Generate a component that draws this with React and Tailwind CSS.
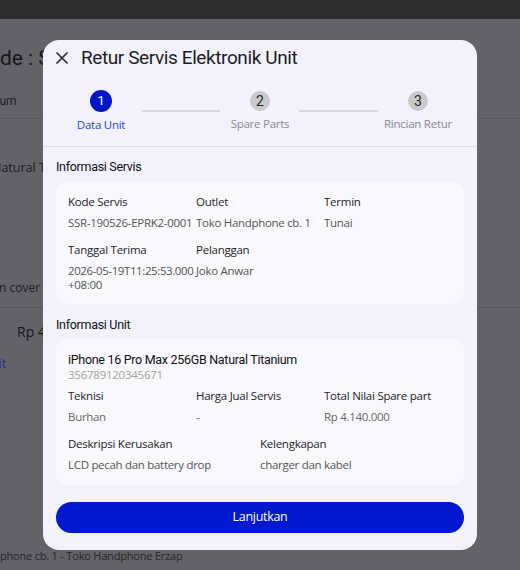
import React from "react";

const body = { fontFamily: '"Open Sans", "Noto Sans", sans-serif' };
const roboto = { fontFamily: 'Roboto, "Noto Sans", sans-serif' };

function Field({ label, value, valueClass = "text-[#555558]" }) {
  return (
    <div className="min-w-0">
      <div className="text-[11.5px] leading-[16px] tracking-[-0.25px] text-[#242427]">{label}</div>
      <div className={`mt-[6px] text-[11.5px] leading-[14px] tracking-[-0.3px] ${valueClass}`}>{value}</div>
    </div>
  );
}

function StepItem({ n, label, active, widthClass, mlClass }) {
  return (
    <div className={`flex flex-col items-center shrink-0 ${widthClass} ${mlClass}`}>
      {active ? (
        <div className="w-[22px] h-[22px] rounded-full bg-[#0016c8] flex items-center justify-center text-white text-[13.5px] leading-none" style={roboto}>
          {n}
        </div>
      ) : (
        <div className="mt-[1px] w-[20px] h-[20px] rounded-full bg-[#cacacd] flex items-center justify-center text-[#262626] text-[14px] leading-none" style={roboto}>
          {n}
        </div>
      )}
      <div
        className={`mt-[5px] whitespace-nowrap text-[11.5px] leading-[16px] tracking-[-0.25px] ${active ? "text-[#2446d6] font-medium" : "text-[#8a8a8e]"}`}
      >
        {label}
      </div>
    </div>
  );
}

export default function App() {
  return (
    <div className="relative w-[520px] h-[570px] overflow-hidden bg-[#636367]" style={body}>
      {/* dimmed page behind the dialog */}
      <div className="h-[19px] bg-[#2f2f2f]" />
      <div className="h-[100px] border-b border-[#57575b] overflow-hidden">
        <div className="pt-[26px] -ml-[25px] whitespace-nowrap text-[21px] leading-[26px] text-[#161618]" style={roboto}>
          Kode : SSR-190526-EPRK2-0001
        </div>
        <div className="mt-[21px] -ml-[31px] whitespace-nowrap text-[12px] leading-[18px] text-[#1c1c1e]" style={roboto}>
          Platinum
        </div>
      </div>
      <div className="h-[189px] border-b border-[#57575b] overflow-hidden">
        <div className="mt-[40px] -ml-[8px] whitespace-nowrap text-[12.5px] leading-[18px] text-[#1c1c1e]">
          Natural Titanium
        </div>
        <div className="mt-[102px] -ml-[1px] whitespace-nowrap text-[12px] leading-[18px] text-[#1c1c1e]">
          n cover belakang
        </div>
      </div>
      <div className="pl-[17px] mt-[14px] whitespace-nowrap text-[14px] leading-[20px] text-[#141416]">Rp 4.140.000</div>
      <div className="mt-[13px] -ml-[16px] whitespace-nowrap text-[12.5px] leading-[18px] text-[#1f2b8c]">Edit</div>
      <div className="mt-[175px] whitespace-nowrap text-[11px] leading-[16px] tracking-[-0.2px] text-[#262628]">
        phone cb. 1 - Toko Handphone Erzap
      </div>

      {/* dialog */}
      <div className="absolute left-[43px] top-[40px] w-[434px] rounded-[16px] bg-[#f3f2fc] overflow-hidden">
        <div className="h-[36px] flex items-center pl-[11px]">
          <svg width="16" height="16" viewBox="0 0 16 16" className="shrink-0">
            <path d="M3 3 L13 13 M13 3 L3 13" stroke="#2a2a2c" strokeWidth="1.7" strokeLinecap="round" fill="none" />
          </svg>
          <div className="ml-[11px] text-[19px] leading-[24px] tracking-[-0.4px] text-[#1d1d1f]" style={roboto}>
            Retur Servis Elektronik Unit
          </div>
        </div>

        <div className="flex items-start pt-[14px] pb-[13px] border-b border-[#dddce6]">
          <StepItem n="1" label="Data Unit" active widthClass="w-[56px]" mlClass="ml-[30px]" />
          <div className="mt-[20px] ml-[13px] w-[78px] h-[2px] bg-[#d4d4dc] shrink-0" />
          <StepItem n="2" label="Spare Parts" widthClass="w-[66px]" mlClass="ml-[7px]" />
          <div className="mt-[20px] ml-[6px] w-[79px] h-[2px] bg-[#d4d4dc] shrink-0" />
          <StepItem n="3" label="Rincian Retur" widthClass="w-[76px]" mlClass="ml-[2px]" />
        </div>

        <div className="px-[13px] pt-[12px] pb-[17px]">
          <div className="text-[12.5px] leading-[16px] tracking-[-0.3px] text-[#111113]" style={roboto}>
            Informasi Servis
          </div>
          <div className="mt-[7px] rounded-[10px] bg-[#f9f8fe] p-[12px]">
            <div className="grid grid-cols-3 gap-y-[12px]">
              <Field label="Kode Servis" value="SSR-190526-EPRK2-0001" />
              <Field label="Outlet" value="Toko Handphone cb. 1" />
              <Field label="Termin" value="Tunai" />
              <Field
                label="Tanggal Terima"
                value={
                  <>
                    <span className="whitespace-nowrap tracking-[-0.4px]">2026-05-19T11:25:53.000</span> +08:00
                  </>
                }
              />
              <Field label="Pelanggan" value="Joko Anwar" />
            </div>
          </div>

          <div className="mt-[13px] text-[12.5px] leading-[16px] tracking-[-0.3px] text-[#111113]" style={roboto}>
            Informasi Unit
          </div>
          <div className="mt-[6px] rounded-[10px] bg-[#f9f8fe] px-[12px] pt-[13px] pb-[13px]">
            <div className="text-[12.5px] leading-[16px] tracking-[-0.3px] text-[#111113]" style={roboto}>
              iPhone 16 Pro Max 256GB Natural Titanium
            </div>
            <div className="text-[11.5px] leading-[14px] tracking-[-0.25px] text-[#a2a2a6]">356789120345671</div>
            <div className="mt-[6px] grid grid-cols-3">
              <Field label="Teknisi" value="Burhan" valueClass="text-[#67676b]" />
              <Field label="Harga Jual Servis" value="-" valueClass="text-[#67676b]" />
              <Field label="Total Nilai Spare part" value="Rp 4.140.000" valueClass="text-[#67676b]" />
            </div>
            <div className="mt-[12px] grid grid-cols-2">
              <Field label="Deskripsi Kerusakan" value="LCD pecah dan battery drop" />
              <Field label="Kelengkapan" value="charger dan kabel" />
            </div>
          </div>

          <button className="mt-[17px] w-full h-[31px] rounded-full bg-[#0019cf] text-white text-[12.5px] tracking-[-0.3px] flex items-center justify-center">
            Lanjutkan
          </button>
        </div>
      </div>
    </div>
  );
}
